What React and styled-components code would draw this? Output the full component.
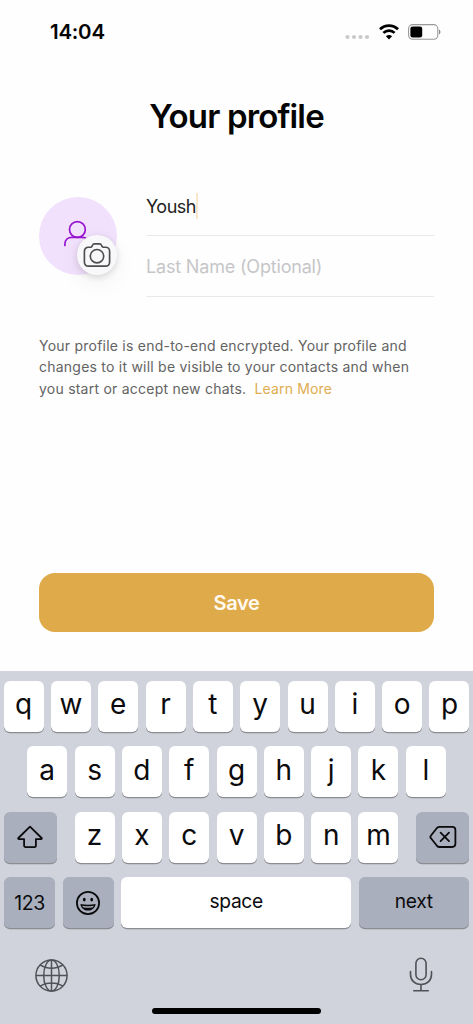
import React from 'react';
import styled, { createGlobalStyle } from 'styled-components';

const GlobalStyle = createGlobalStyle`
  *, *::before, *::after { box-sizing: border-box; }
  body { margin: 0; background: #fefefe; }
  svg { display: block; flex: none; }
`;

const Screen = styled.div`
  width: 473px;
  height: 1024px;
  display: flex;
  flex-direction: column;
  overflow: hidden;
  background: #fefefe;
  color: #050505;
  font-family: Inter, 'Liberation Sans', sans-serif;
`;

const StatusBar = styled.header`
  height: 64px;
  flex: none;
  display: flex;
  align-items: center;
  justify-content: space-between;
  padding: 0 32px 0 50px;
`;

const Clock = styled.time`
  padding-bottom: 2px;
  font-size: 20.5px;
  font-weight: 600;
  letter-spacing: -0.25px;
`;

const StatusIcons = styled.div`
  display: flex;
  align-items: center;
  gap: 9px;
`;

const Title = styled.h1`
  margin: 32px 0 0;
  height: 40px;
  line-height: 40px;
  text-align: center;
  font-size: 33px;
  font-weight: 600;
  letter-spacing: -0.85px;
`;

const Profile = styled.section`
  display: flex;
  gap: 29px;
  margin: 40px 39px 0;
`;

const Avatar = styled.div`
  position: relative;
  flex: none;
  width: 78px;
  height: 78px;
  margin-top: 21px;
  padding: 23px 0 0 25px;
  border-radius: 50%;
  background: #f2e1fc;
`;

const CameraBadge = styled.div`
  position: absolute;
  left: 38px;
  top: 38px;
  width: 40px;
  height: 40px;
  display: grid;
  place-items: center;
  border-radius: 50%;
  background: #f8f7f9;
  box-shadow: 0 2px 7px rgba(0, 0, 0, 0.14), 0 8px 24px rgba(0, 0, 0, 0.05);
`;

const Fields = styled.div`
  flex: 1;
`;

const Field = styled.div`
  display: flex;
  align-items: center;
  height: ${(p) => p.$height}px;
  padding-top: 1px;
  border-bottom: 1px solid #e9e9e9;
  font-size: 18px;
  letter-spacing: ${(p) => p.$tracking}px;
  color: ${(p) => (p.$placeholder ? '#c6c6c8' : '#222')};
`;

const Caret = styled.span`
  width: 2px;
  height: 26px;
  background: #fae6cc;
`;

const Notice = styled.p`
  margin: 37.5px 39px 0;
  font-size: 14px;
  line-height: 21.800px;
  letter-spacing: 0.23px;
  color: #636363;
  white-space: nowrap;
`;

const LearnMore = styled.a`
  margin-left: 4px;
  letter-spacing: 0.15px;
  color: #dfac50;
`;

const SaveButton = styled.button`
  height: 59px;
  flex: none;
  margin: auto 39px 39px;
  border: 0;
  border-radius: 16px;
  background: #dfaa4a;
  color: #fffaf0;
  font: 600 20px Inter, 'Liberation Sans', sans-serif;
  letter-spacing: -0.3px;
`;

const Keyboard = styled.section`
  height: 353px;
  flex: none;
  display: flex;
  flex-direction: column;
  padding-top: 9.5px;
  background: #d0d3db;
`;

const KeyRow = styled.div`
  display: flex;
  justify-content: ${(p) => (p.$spread ? 'space-between' : 'center')};
  gap: ${(p) => (p.$spread ? 0 : 7.33)}px;
  height: 51px;
  margin-bottom: 14.6px;
  padding: 0 3.8px;
`;

const LetterGroup = styled.div`
  display: flex;
  gap: 7.33px;
`;

const Key = styled.button`
  flex: none;
  display: flex;
  align-items: center;
  justify-content: center;
  width: ${(p) => p.$width || 40}px;
  height: 51px;
  padding: 0 0 ${(p) => p.$lift ?? 4}px;
  border: 0;
  border-radius: 6px;
  background: ${(p) => (p.$dark ? '#a9afbd' : '#fff')};
  box-shadow: 0 1.3px 0 #8b8d92;
  color: #0b0b0d;
  font-family: Inter, 'Liberation Sans', sans-serif;
  font-size: ${(p) => p.$size || 28}px;
  font-weight: 400;
  letter-spacing: ${(p) => (p.$size ? -0.35 : 0)}px;
`;

const KeyboardFooter = styled.div`
  display: flex;
  align-items: center;
  justify-content: space-between;
  padding: 14px 39px 0 34px;
`;

const HomeIndicator = styled.div`
  width: 169px;
  height: 6px;
  margin: auto auto 10px;
  border-radius: 3px;
  background: #000;
`;

const SignalDots = () => (
  <svg width="25" height="20" viewBox="0 0 25 20" fill="#cacaca">
    {[2.5, 9, 15.5, 22].map((x) => (
      <circle key={x} cx={x} cy="15" r="2.1" />
    ))}
  </svg>
);

const Wifi = () => (
  <svg width="20" height="16" viewBox="0 0 20 16" fill="none" stroke="#000" strokeWidth="2.7">
    <path d="M1 5.3C6 .3 14 .3 19 5.3" />
    <path d="M4.4 8.9c3.2-3.1 8-3.1 11.2 0" />
    <path d="M6.9 12.3 10 15.5l3.1-3.2c-1.7-1.6-4.5-1.6-6.2 0Z" fill="#000" stroke="none" />
  </svg>
);

const Battery = () => (
  <svg width="33" height="16" viewBox="0 0 33 16">
    <rect x=".6" y=".6" width="29.2" height="14.6" rx="4" fill="none" stroke="#999" strokeWidth="1.1" />
    <rect x="2.4" y="2.4" width="11.8" height="11" rx="2.2" />
    <path d="M31 5.4c1.900.8 1.900 4.200 0 5Z" fill="#888" />
  </svg>
);

const Person = () => (
  <svg width="26" height="28" viewBox="0 0 26 28" fill="none" stroke="#9714cf" strokeWidth="1.7" strokeLinecap="round">
    <circle cx="13.4" cy="9.5" r="7.9" />
    <path d="M.9 25.400v-1.400c0-4 3-6.700 7-6.700h10.500c1.700 0 3.300.5 4.300 1.500" />
  </svg>
);

const Camera = () => (
  <svg width="28" height="28" viewBox="0 0 28 28" fill="none" stroke="#4d4d4d" strokeWidth="1.65" strokeLinejoin="round">
    <path d="M5.3 6.2h2.2c.8 0 1.3-.4 1.6-1.1l.5-1.1c.3-.8.9-1.2 1.8-1.2h5.2c.9 0 1.5.4 1.8 1.2l.5 1.1c.3.7.8 1.1 1.6 1.1h2.2c2.2 0 3.9 1.7 3.9 3.9v11.200c0 2.200-1.700 3.900-3.900 3.900H5.300c-2.200 0-3.900-1.700-3.900-3.900V10.100c0-2.200 1.700-3.900 3.900-3.900Z" />
    <circle cx="14" cy="15.200" r="6.700" />
  </svg>
);

const Shift = () => (
  <svg width="28" height="24" viewBox="0 0 28 24" fill="none" stroke="#0b0b0d" strokeWidth="1.8" strokeLinejoin="round">
    <path d="m14 1.700 11.600 11.300c.5.500.2 1.100-.5 1.100h-5.200v6.400c0 1-.6 1.600-1.600 1.600H9.700c-1 0-1.600-.6-1.600-1.600v-6.400H2.900c-.7 0-1-.6-.5-1.100L14 1.700Z" />
  </svg>
);

const Backspace = () => (
  <svg width="28" height="24" viewBox="0 0 28 24" fill="none" stroke="#0b0b0d" strokeWidth="1.8" strokeLinecap="round" strokeLinejoin="round">
    <path d="M10.500 1.800h12.700c2 0 3.200 1.200 3.200 3.200v13.800c0 2-1.200 3.200-3.200 3.200H10.500c-1 0-1.700-.3-2.400-1L2 13.300c-.8-.9-.8-1.900 0-2.800l6.100-7.700c.7-.7 1.400-1 2.400-1Z" />
    <path d="m11.600 7.700 8.400 8.400m0-8.400-8.400 8.400" />
  </svg>
);

const Smiley = () => (
  <svg width="26" height="26" viewBox="0 0 26 26">
    <circle cx="13" cy="13" r="11.100" fill="none" stroke="#0b0b0d" strokeWidth="1.800" />
    <ellipse cx="9.300" cy="9.600" rx="1.350" ry="1.900" />
    <ellipse cx="16.700" cy="9.600" rx="1.350" ry="1.900" />
    <path d="M5.400 14c4.600 1.100 10.600 1.100 15.200 0-.4 4-3.500 6.600-7.600 6.600S5.800 18 5.400 14Z" fill="#0b0b0d" />
    <path d="M7.300 15.700c3.600.7 7.800.7 11.400 0l-.7 1.500c-3.200.7-6.800.7-10 0Z" fill="#a9afbd" />
  </svg>
);

const Globe = () => (
  <svg width="34" height="34" viewBox="0 0 34 34" fill="none" stroke="#505259" strokeWidth="1.500">
    <circle cx="17.500" cy="17.500" r="15.600" />
    <ellipse cx="17.500" cy="17.500" rx="7.800" ry="15.600" />
    <path d="M17.500 1.900v31.200M1.900 17.500h31.200M6.200 6.900c6.200 4.300 16.400 4.300 22.600 0M6.200 28.100c6.200-4.300 16.400-4.300 22.600 0" />
  </svg>
);

const Microphone = () => (
  <svg width="26" height="36" viewBox="0 0 26 36" fill="none" stroke="#505259" strokeWidth="1.600" strokeLinecap="round">
    <rect x="7.900" y="1.300" width="10.200" height="21.500" rx="5.100" />
    <path d="M2.500 14.500v2.700c0 6.200 4.300 10.300 10.500 10.300s10.500-4.100 10.500-10.300v-2.700M13 27.500v6M5.700 33.800h14.600" />
  </svg>
);

const letters = (row) => [...row].map((letter) => <Key key={letter}>{letter}</Key>);

export default function App() {
  return (
    <>
      <GlobalStyle />
      <Screen>
        <StatusBar>
          <Clock>14:04</Clock>
          <StatusIcons>
            <SignalDots />
            <Wifi />
            <Battery />
          </StatusIcons>
        </StatusBar>
        <Title>Your profile</Title>
        <Profile>
          <Avatar>
            <Person />
            <CameraBadge>
              <Camera />
            </CameraBadge>
          </Avatar>
          <Fields>
            <Field $height={60} $tracking={-0.5}>
              Yoush
              <Caret />
            </Field>
            <Field $height={61} $tracking={-0.18} $placeholder>
              Last Name (Optional)
            </Field>
          </Fields>
        </Profile>
        <Notice>
          Your profile is end-to-end encrypted. Your profile and
          <br />
          changes to it will be visible to your contacts and when
          <br />
          you start or accept new chats. <LearnMore>Learn More</LearnMore>
        </Notice>
        <SaveButton>Save</SaveButton>
        <Keyboard>
          <KeyRow>{letters('qwertyuiop')}</KeyRow>
          <KeyRow>{letters('asdfghjkl')}</KeyRow>
          <KeyRow $spread>
            <Key $width={53} $dark $lift={0} aria-label="shift">
              <Shift />
            </Key>
            <LetterGroup>{letters('zxcvbnm')}</LetterGroup>
            <Key $width={53} $dark $lift={0} aria-label="delete">
              <Backspace />
            </Key>
          </KeyRow>
          <KeyRow>
            <Key $width={51.3} $dark $size={19.5} $lift={0}>123</Key>
            <Key $width={51.3} $dark $lift={0} aria-label="emoji">
              <Smiley />
            </Key>
            <Key $width={230} $size={19.2}>space</Key>
            <Key $width={110.500} $dark $size={19.2}>next</Key>
          </KeyRow>
          <KeyboardFooter>
            <Globe />
            <Microphone />
          </KeyboardFooter>
          <HomeIndicator />
        </Keyboard>
      </Screen>
    </>
  );
}
